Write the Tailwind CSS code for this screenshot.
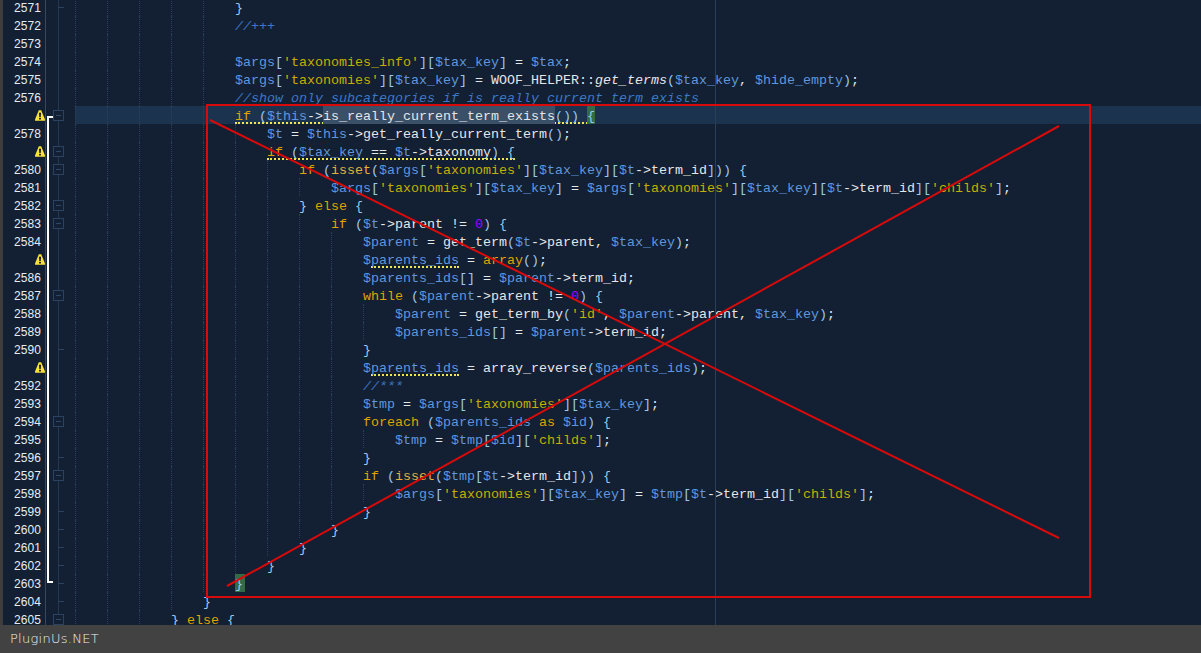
<!DOCTYPE html>
<html lang="en">
<head>
    <meta charset="UTF-8">
    <title>PluginUs.NET</title>
    <script src="https://cdn.jsdelivr.net/npm/@tailwindcss/browser@4"></script>
</head>
<body class="bg-[#131f33]">
    <div class="relative w-[1201px] h-[653px] overflow-hidden flex flex-col">
        <div id="editor" class="h-[625px] overflow-hidden bg-[#131f33]">
            <div id="rows" class="-mt-[2px]"></div>
        </div>
        <div class="h-[28px] bg-[#424242] flex items-center pl-[10px] text-[13px] tracking-[0.28px] text-[#eeeeee] font-['DejaVu_Sans',sans-serif] font-light">PluginUs.NET</div>

        <!-- print margin -->
        <div class="absolute left-[715px] top-0 h-[625px] w-px bg-[#2b3f57]"></div>
        <!-- red box and cross -->
        <div class="absolute left-[206px] top-[104px] w-[885px] h-[494px] border-2 border-[#d90a0a]"></div>
        <svg class="absolute inset-0" width="1201" height="653" fill="none" stroke="#d90a0a" stroke-width="2">
            <path d="M210 120L1059 538"/>
            <path d="M1059 126L227 586"/>
        </svg>
    </div>

    <script>
        // tokens -> coloured spans
        function c(src) {
            const re = /\/\/.*|'[^']*'|\$\w+|\b(?:if|else|while|foreach|as|array)\b|\bisset\b|\b0\b|[()\[\]{}]/g;
            return src.replace(re, (t) => {
                if (t.startsWith('//')) return `<span class="text-[#3b78c6] italic">${t}</span>`;
                if (t[0] === "'") return `<span class="text-[#c4b000]">${t}</span>`;
                if (t[0] === '$') return `<span class="text-[#5f97dc]">${t}</span>`;
                if (t === '0') return `<span class="text-[#a000ff]">${t}</span>`;
                if (t === 'isset') return `<span class="text-[#e3b23c]">${t}</span>`;
                if (/^\w/.test(t)) return `<span class="text-[#dfa400]">${t}</span>`;
                return `<span class="text-[#9cc8ee]">${t}</span>`;
            });
        }
        const wavy = (html) => `<span class="inline-block h-[18px] align-top border-b-2 border-dotted border-[#f2e64a]">${html}</span>`;
        const mark = (html) => `<span class="inline-block h-[18px] align-top bg-[#3a5068]">${html}</span>`;
        const match = (html) => `<span class="inline-block h-[18px] align-top bg-[#336b44]">${html}</span>`;

        const rows = [
            [2571, 5, c('}'), 'tick'],
            [2572, 5, c('//+++')],
            [2573, 5, ''],
            [2574, 5, c("$args['taxonomies_info'][$tax_key] = $tax;")],
            [2575, 5, c("$args['taxonomies'][$tax_key] = WOOF_HELPER::") + '<span class="italic">get_terms</span>' + c('($tax_key, $hide_empty);')],
            [2576, 5, c('//show only subcategories if is really current term exists')],
            [2577, 5, wavy(c('if ($this->') + mark('is_really_current_term_exists') + c('()) ') + match(c('{'))), 'box', 'warn'],
            [2578, 6, c('$t = $this->get_really_current_term();')],
            [2579, 6, wavy(c('if ($tax_key == $t->taxonomy) {')), 'box', 'warn'],
            [2580, 7, c("if (isset($args['taxonomies'][$tax_key][$t->term_id])) {"), 'box'],
            [2581, 8, c("$args['taxonomies'][$tax_key] = $args['taxonomies'][$tax_key][$t->term_id]['childs'];")],
            [2582, 7, c('} else {'), 'box'],
            [2583, 8, c('if ($t->parent != 0) {'), 'box'],
            [2584, 9, c('$parent = get_term($t->parent, $tax_key);')],
            [2585, 9, '<span class="text-[#5f97dc]">$</span>' + wavy('<span class="text-[#5f97dc]">parents_ids</span>') + c(' = array();'), '', 'warn'],
            [2586, 9, c('$parents_ids[] = $parent->term_id;')],
            [2587, 9, c('while ($parent->parent != 0) {'), 'box'],
            [2588, 10, c("$parent = get_term_by('id', $parent->parent, $tax_key);")],
            [2589, 10, c('$parents_ids[] = $parent->term_id;')],
            [2590, 9, c('}'), 'tick'],
            [2591, 9, '<span class="text-[#5f97dc]">$</span>' + wavy('<span class="text-[#5f97dc]">parents_ids</span>') + c(' = array_reverse($parents_ids);'), '', 'warn'],
            [2592, 9, c('//***')],
            [2593, 9, c("$tmp = $args['taxonomies'][$tax_key];")],
            [2594, 9, c('foreach ($parents_ids as $id) {'), 'box'],
            [2595, 10, c("$tmp = $tmp[$id]['childs'];")],
            [2596, 9, c('}'), 'tick'],
            [2597, 9, c('if (isset($tmp[$t->term_id])) {'), 'box'],
            [2598, 10, c("$args['taxonomies'][$tax_key] = $tmp[$t->term_id]['childs'];")],
            [2599, 9, c('}'), 'tick'],
            [2600, 8, c('}'), 'tick'],
            [2601, 7, c('}'), 'tick'],
            [2602, 6, c('}'), 'tick'],
            [2603, 5, '<span class="inline-block w-[10px] h-[18px] align-top bg-[#336b44]">' + c('}') + '</span>', 'tick'],
            [2604, 4, c('}'), 'tick'],
            [2605, 3, c('} else {'), 'box'],
        ];

        const guide = '<span class="inline-block w-8 h-[18px] align-top border-l border-dotted border-[#2a4058]"></span>';
        const warnIcon = '<svg width="10" height="11" viewBox="0 0 10 11" class="mr-[-4px] mt-[4px]"><path d="M3.8 0.2H6.2L10 9.4V10.8H0V9.4Z" fill="#f7e03a"/><path d="M4 2.8H6L5.7 7.2H4.3ZM4.1 7.9H5.9V9.6H4.1Z" fill="#151515"/></svg>';

        document.getElementById('rows').innerHTML = rows.map(([num, level, code, fold, warn]) => {
            let bar = '';
            if (num === 2577) bar = '<div class="mt-[10px] w-[6px] h-[8px] border-l-2 border-t-2 border-white"></div>';
            else if (num === 2603) bar = '<div class="w-[6px] h-[9px] border-l-2 border-b-2 border-white"></div>';
            else if (num > 2577 && num < 2603) bar = '<div class="h-[18px] border-l-2 border-white"></div>';

            let foldEl = '';
            if (fold === 'box') foldEl = '<div class="absolute left-0 top-[4px] w-[11px] h-[11px] border border-[#2b4260] bg-[#131f33] flex items-center justify-center"><div class="w-[5px] h-px bg-[#2f4866]"></div></div>';
            if (fold === 'tick') foldEl = '<div class="absolute left-[5px] top-[9px] w-[6px] h-px bg-[#2b4260]"></div>';

            const current = num === 2577 ? 'bg-[#1c334f]' : '';
            return `<div class="flex h-[18px]">
                <div class="w-[3px] bg-[#3d3d3d]"></div>
                <div class="w-[42px] pr-[4px] flex justify-end items-start text-[12px] leading-[20px] tracking-[0.1px] text-[#e4eef2] font-['Liberation_Sans',sans-serif]">${warn ? warnIcon : num}</div>
                <div class="w-px bg-[#39475a]"></div>
                <div class="w-[7px] pl-px">${bar}</div>
                <div class="relative w-[22px]"><div class="absolute left-[5px] top-0 w-px h-[18px] bg-[#24384f]"></div>${foldEl}</div>
                <div class="flex-1 whitespace-pre text-[13.33px] leading-[22px] text-[#e6e6e6] font-['Liberation_Mono',monospace] ${current}">${guide.repeat(level)}${code}</div>
            </div>`;
        }).join('');
    </script>
</body>
</html>
